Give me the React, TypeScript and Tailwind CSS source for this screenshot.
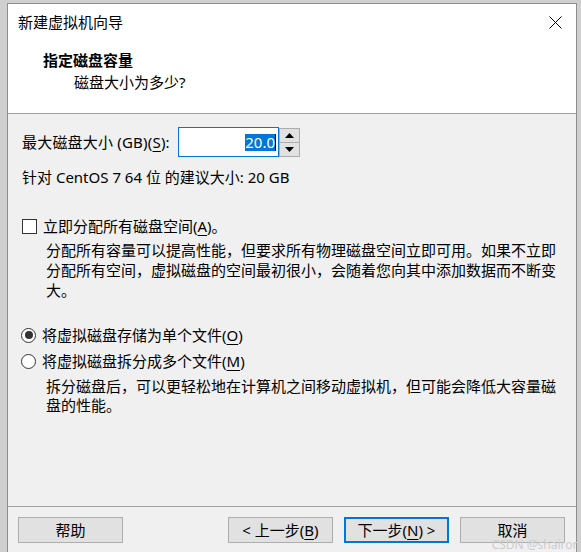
import React from "react";

const font = { fontFamily: '"Noto Sans", "Noto Sans CJK SC", sans-serif' };

function U({ children }: { children: React.ReactNode }) {
  return <span className="underline underline-offset-[3px] decoration-1">{children}</span>;
}

function Btn({ children, focused }: { children: React.ReactNode; focused?: boolean }) {
  return (
    <button
      className={
        "h-[26px] w-[105px] flex items-center justify-center bg-[#e1e1e1] text-[15px] leading-[18px] text-black " +
        (focused ? "border-2 border-[#0078d7]" : "border border-[#adadad]")
      }
    >
      {children}
    </button>
  );
}

export default function App() {
  return (
    <div
      className="relative w-[581px] h-[552px] bg-[#cfcfcf] pl-[7px] pr-[4px] pt-[3px] flex overflow-hidden"
      style={font}
    >
      <div className="flex-1 flex flex-col border-l border-t border-r border-[#8f8f8f] bg-[#f0f0f0] text-black">
        {/* Header */}
        <div className="bg-white border-b border-[#a0a0a0] h-[110px] flex flex-col">
          <div className="h-[36px] flex items-center justify-between pl-[10px] pr-[13px]">
            <span className="text-[15px] leading-[20px]">新建虚拟机向导</span>
            <svg width="13" height="13" viewBox="0 0 13 13" className="mr-[1px]">
              <path d="M0.5 0.5 L12.5 12.5 M12.5 0.5 L0.5 12.5" stroke="#000" strokeWidth="1" fill="none" />
            </svg>
          </div>
          <div className="pl-[35px] mt-[10px] text-[15px] leading-[20px] font-bold">指定磁盘容量</div>
          <div className="pl-[66px] mt-[2px] text-[15px] leading-[20px]">磁盘大小为多少?</div>
        </div>

        {/* Content */}
        <div className="flex-1 flex flex-col pl-[14px] pr-[20px] text-[15px] leading-[20px]">
          <div className="mt-[13px] flex items-center h-[30px]">
            <span className="w-[156px] tracking-[0.2px]">
              最大磁盘大小 (GB)(<U>S</U>):
            </span>
            <div className="w-[101px] h-[30px] border border-[#0078d7] bg-white flex items-center justify-end pr-[2px]">
              <span className="bg-[#0078d7] text-white text-[15px] leading-[17px]">20.0</span>
              <span className="w-[1px] h-[17px] bg-black"></span>
            </div>
            <div className="w-[21px] h-[29px] flex flex-col border border-[#adadad]">
              <div className="flex-1 bg-[#e1e1e1] border-b border-[#adadad] flex items-center justify-center">
                <svg width="9" height="5" viewBox="0 0 9 5">
                  <path d="M0 5 L4.5 0 L9 5 Z" fill="#000" />
                </svg>
              </div>
              <div className="flex-1 bg-[#e1e1e1] flex items-center justify-center">
                <svg width="9" height="5" viewBox="0 0 9 5">
                  <path d="M0 0 L9 0 L4.5 5 Z" fill="#000" />
                </svg>
              </div>
            </div>
          </div>

          <div className="mt-[10px]">针对 CentOS 7 64 位 的建议大小: 20 GB</div>

          <div className="mt-[29px] flex items-center h-[20px]">
            <span className="w-[15px] h-[15px] border border-[#333] bg-white"></span>
            <span className="ml-[6px]">
              立即分配所有磁盘空间(<U>A</U>)。
            </span>
          </div>
          <div className="mt-[4px] pl-[24px]">
            <div>分配所有容量可以提高性能，但要求所有物理磁盘空间立即可用。如果不立即</div>
            <div>分配所有空间，虚拟磁盘的空间最初很小，会随着您向其中添加数据而不断变</div>
            <div>大。</div>
          </div>

          <div className="mt-[25px] flex items-center h-[20px]">
            <span className="w-[15px] h-[15px] rounded-full border border-[#333] bg-white flex items-center justify-center -ml-[1px]">
              <span className="w-[8px] h-[8px] rounded-full bg-[#333]"></span>
            </span>
            <span className="ml-[6px]">
              将虚拟磁盘存储为单个文件(<U>O</U>)
            </span>
          </div>
          <div className="mt-[6px] flex items-center h-[20px]">
            <span className="w-[15px] h-[15px] rounded-full border border-[#333] bg-white -ml-[1px]"></span>
            <span className="ml-[6px]">
              将虚拟磁盘拆分成多个文件(<U>M</U>)
            </span>
          </div>
          <div className="mt-[6px] pl-[24px] leading-[19px]">
            <div>拆分磁盘后，可以更轻松地在计算机之间移动虚拟机，但可能会降低大容量磁</div>
            <div>盘的性能。</div>
          </div>
        </div>

        {/* Footer */}
        <div className="border-t border-[#a0a0a0] pt-[10px] pb-[9px] pl-[10px] pr-[11px] flex items-center">
          <Btn>帮助</Btn>
          <div className="flex-1"></div>
          <Btn>
            &lt; 上一步(<U>B</U>)
          </Btn>
          <div className="w-[11px]"></div>
          <Btn focused>
            下一步(<U>N</U>) &gt;
          </Btn>
          <div className="w-[11px]"></div>
          <Btn>取消</Btn>
        </div>
      </div>
      <div className="absolute right-[1px] bottom-[1px] text-[12px] leading-[12px] text-[#cccccc] pointer-events-none">
        CSDN @shairon
      </div>
    </div>
  );
}
